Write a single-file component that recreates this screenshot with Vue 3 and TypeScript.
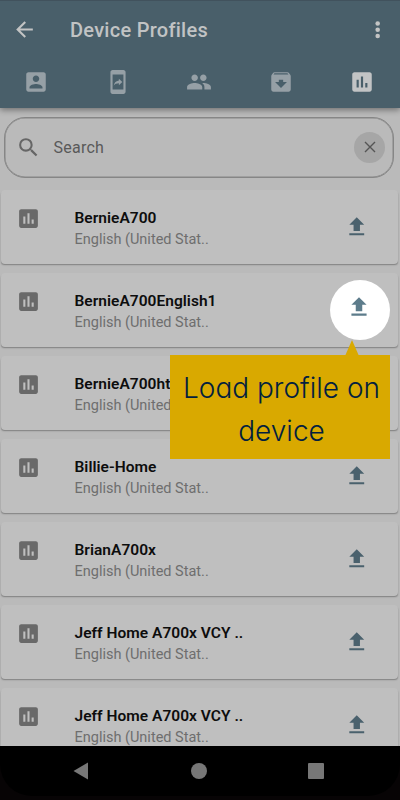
<script setup lang="ts">
interface Tab {
  label: string
  path: string
  active?: boolean
}

interface Profile {
  name: string
  language: string
}

const chartPath =
  'M19 3H5c-1.1 0-2 .9-2 2v14c0 1.1.9 2 2 2h14c1.1 0 2-.9 2-2V5c0-1.1-.9-2-2-2zM9 17H7v-7h2v7zm4 0h-2V7h2v10zm4 0h-2v-4h2v4z'
const uploadPath = 'M9 16h6v-6h4l-7-7-7 7h4zm-4 2h14v2H5z'

const tabs: Tab[] = [
  {
    label: 'Contact',
    path: 'M3 5v14c0 1.1.89 2 2 2h14c1.1 0 2-.9 2-2V5c0-1.1-.9-2-2-2H5c-1.11 0-2 .9-2 2zm12 4c0 1.66-1.34 3-3 3s-3-1.34-3-3 1.34-3 3-3 3 1.34 3 3zm-9 8c0-2 4-3.1 6-3.1s6 1.1 6 3.1v1H6v-1z',
  },
  {
    label: 'Device',
    path: 'M17 1H7c-1.1 0-1.99.9-1.99 2v18c0 1.1.89 2 1.99 2h10c1.1 0 2-.9 2-2V3c0-1.1-.9-2-2-2zm0 18H7V5h10v14zm-4.2-5.78v1.75l3.2-2.99L12.8 9v1.7c-3.11.43-4.35 2.56-4.8 4.7 1.11-1.5 2.58-2.18 4.8-2.18z',
  },
  {
    label: 'Groups',
    path: 'M16 11c1.66 0 2.99-1.34 2.99-3S17.66 5 16 5c-1.66 0-3 1.34-3 3s1.34 3 3 3zm-8 0c1.66 0 2.99-1.34 2.99-3S9.66 5 8 5C6.34 5 5 6.34 5 8s1.34 3 3 3zm0 2c-2.33 0-7 1.17-7 3.5V19h14v-2.5c0-2.33-4.67-3.5-7-3.5zm8 0c-.29 0-.62.02-.97.05 1.16.84 1.97 1.97 1.97 3.45V19h6v-2.5c0-2.33-4.67-3.5-7-3.5z',
  },
  {
    label: 'Archive',
    path: 'M20.54 5.23l-1.39-1.68C18.88 3.21 18.47 3 18 3H6c-.47 0-.88.21-1.16.55L3.46 5.23C3.17 5.57 3 6.02 3 6.5V19c0 1.1.9 2 2 2h14c1.1 0 2-.9 2-2V6.5c0-.48-.17-.93-.46-1.27zM12 17.5L6.5 12H10v-2h4v2h3.5L12 17.5zM5.12 5l.81-1h12l.94 1H5.12z',
  },
  { label: 'Profiles', path: chartPath, active: true },
]

const language = 'English (United Stat..'
const profiles: Profile[] = [
  { name: 'BernieA700', language },
  { name: 'BernieA700English1', language },
  { name: 'BernieA700ht', language },
  { name: 'Billie-Home', language },
  { name: 'BrianA700x', language },
  { name: 'Jeff Home A700x VCY ..', language },
  { name: 'Jeff Home A700x VCY ..', language },
]
</script>

<template>
  <div class="screen">
    <header class="header">
      <div class="title-bar">
        <svg class="back" viewBox="0 0 24 24"><path d="M20 11H7.83l5.59-5.59L12 4l-8 8 8 8 1.41-1.41L7.83 13H20v-2z" /></svg>
        <h1 class="title">Device Profiles</h1>
        <svg class="more" viewBox="0 0 24 24"><circle cx="11.7" cy="6" r="2.1" /><circle cx="11.7" cy="11.8" r="2.1" /><circle cx="11.7" cy="17.6" r="2.1" /></svg>
      </div>
      <nav class="tabs">
        <svg v-for="tab in tabs" :key="tab.label" class="tab" :class="{ active: tab.active }" viewBox="0 0 24 24">
          <path :d="tab.path" />
        </svg>
      </nav>
    </header>

    <main class="content">
      <div class="search">
        <svg class="lens" viewBox="0 0 24 24"><path d="M15.5 14h-.79l-.28-.27A6.471 6.471 0 0 0 16 9.5 6.5 6.5 0 1 0 9.5 16c1.61 0 3.09-.59 4.23-1.57l.27.28v.79l5 4.99L20.49 19l-4.99-5zm-6 0C7.01 14 5 11.99 5 9.5S7.01 5 9.5 5 14 7.01 14 9.5 11.99 14 9.5 14z" /></svg>
        <span class="placeholder">Search</span>
        <span class="clear"><svg viewBox="0 0 12 12"><path d="M1 1l10 10M11 1L1 11" /></svg></span>
      </div>

      <ul class="list">
        <li v-for="(profile, index) in profiles" :key="index" class="card">
          <svg class="chart" viewBox="0 0 24 24"><path :d="chartPath" /></svg>
          <div class="texts">
            <div class="name">{{ profile.name }}</div>
            <div class="language">{{ profile.language }}</div>
          </div>
          <svg class="upload" viewBox="0 0 24 24"><path :d="uploadPath" /></svg>
        </li>
      </ul>
    </main>

    <footer class="navbar">
      <svg class="nav-back" viewBox="0 0 15 18"><path d="M0 9L14.5 0.5V17.5z" /></svg>
      <span class="nav-home"></span>
      <span class="nav-recent"></span>
    </footer>

    <div class="spotlight">
      <svg viewBox="0 0 24 24"><path :d="uploadPath" /></svg>
    </div>
    <div class="callout">
      <span>Load profile on</span>
      <span>device</span>
    </div>
  </div>
</template>

<style>
body {
  background: #070405;
}
</style>

<style scoped>
.screen {
  position: relative;
  display: flex;
  flex-direction: column;
  width: 400px;
  height: 800px;
  overflow: hidden;
  background: #070405;
  font-family: Roboto, "Liberation Sans", sans-serif;
}

svg {
  display: block;
  flex: none;
}

.header {
  position: relative;
  z-index: 1;
  flex: none;
  box-sizing: border-box;
  height: 108px;
  border-top: 1px solid #41525d;
  background: #495f6a;
  box-shadow: 0 2px 6px rgba(0, 0, 0, 0.4);
}

.title-bar {
  display: flex;
  align-items: center;
  height: 57px;
  padding: 0 9px 0 12px;
}

.back {
  width: 25px;
  height: 25px;
  fill: #c3c4c4;
}

.title {
  flex: 1;
  margin: 1px 0 0 33px;
  color: #c1c3c4;
  font-size: 20px;
  font-weight: 500;
  line-height: 26px;
  letter-spacing: 0.27px;
}

.more {
  width: 26px;
  height: 26px;
  fill: #c3c4c4;
}

.tabs {
  display: flex;
  justify-content: space-between;
  padding: 11px 25px 0 23.3px;
}

.tab {
  width: 26px;
  height: 26px;
  fill: #96a0a6;
}

.tab.active {
  fill: #c2c4c5;
}

.content {
  flex: none;
  box-sizing: border-box;
  height: 638px;
  padding: 8.5px 1px 0 0.5px;
  overflow: hidden;
  background: #bababa;
}

.search {
  display: flex;
  align-items: center;
  box-sizing: border-box;
  height: 61px;
  margin: 0 5px 0 3.5px;
  padding: 0 8px 0 11px;
  border: 1px solid #868686;
  border-radius: 21px;
  box-shadow: inset 0 0 0 0.5px #868686;
}

.lens {
  width: 25px;
  height: 25px;
  fill: #666;
}

.placeholder {
  flex: 1;
  margin-left: 12.5px;
  color: #595959;
  font-size: 16px;
  letter-spacing: 0.25px;
}

.clear {
  display: flex;
  align-items: center;
  justify-content: center;
  width: 31px;
  height: 31px;
  border-radius: 50%;
  background: #a6a6a6;
}

.clear svg {
  width: 12px;
  height: 12px;
  fill: none;
  stroke: #555;
  stroke-width: 1.4;
}

.list {
  display: flex;
  flex-direction: column;
  gap: 9px;
  margin: 12.5px 0 0;
  padding: 0;
  list-style: none;
}

.card {
  display: flex;
  flex: none;
  align-items: flex-start;
  box-sizing: border-box;
  width: 397.5px;
  height: 74px;
  padding: 16px 28.8px 0 15.8px;
  border-radius: 4px;
  background: #bfbfbf;
  box-shadow: 0 1.5px 1.5px -0.5px rgba(0, 0, 0, 0.32);
}

.chart {
  width: 25px;
  height: 25px;
  fill: #696969;
}

.texts {
  flex: 1;
  margin-left: 33.2px;
  white-space: nowrap;
}

.name {
  margin-top: 0.5px;
  color: #0d0d0d;
  font-size: 15.5px;
  font-weight: 600;
  line-height: 22px;
  letter-spacing: 0.03px;
}

.language {
  margin-top: 1px;
  color: #6e6e6e;
  font-size: 14.5px;
  line-height: 20px;
}

.upload {
  width: 25.5px;
  height: 25.5px;
  margin-top: 8px;
  fill: #4a616d;
}

.navbar {
  display: flex;
  flex: none;
  align-items: center;
  justify-content: space-between;
  height: 50px;
  padding: 0 76px 0 73px;
  border-radius: 0 0 32px 32px;
  background: #000;
}

.nav-back {
  width: 16px;
  height: 18px;
  fill: #777;
}

.nav-home {
  width: 16px;
  height: 16px;
  border-radius: 50%;
  background: #777;
}

.nav-recent {
  width: 16px;
  height: 16px;
  border-radius: 1px;
  background: #777;
}

.spotlight {
  position: absolute;
  z-index: 2;
  top: 280px;
  left: 330px;
  display: flex;
  justify-content: center;
  box-sizing: border-box;
  width: 60px;
  height: 60px;
  padding: 14px 2px 0 0;
  border-radius: 50%;
  background: #fff;
}

.spotlight svg {
  width: 26px;
  height: 26px;
  fill: #5d7c8b;
}

.callout {
  position: absolute;
  z-index: 3;
  top: 355px;
  left: 170px;
  display: flex;
  flex-direction: column;
  align-items: center;
  box-sizing: border-box;
  width: 220px;
  height: 104px;
  padding: 12px 0 0 3px;
  background: #d9a900;
  color: #031f3f;
  font-family: Inter, Lato, sans-serif;
  font-feature-settings: "cv11";
  font-size: 28px;
  font-weight: 300;
  line-height: 43px;
  white-space: nowrap;
}

.callout::before {
  position: absolute;
  top: -15px;
  left: 175px;
  width: 14px;
  height: 16px;
  background: #d9a900;
  clip-path: polygon(50% 0, 100% 100%, 0 100%);
  content: "";
}
</style>
